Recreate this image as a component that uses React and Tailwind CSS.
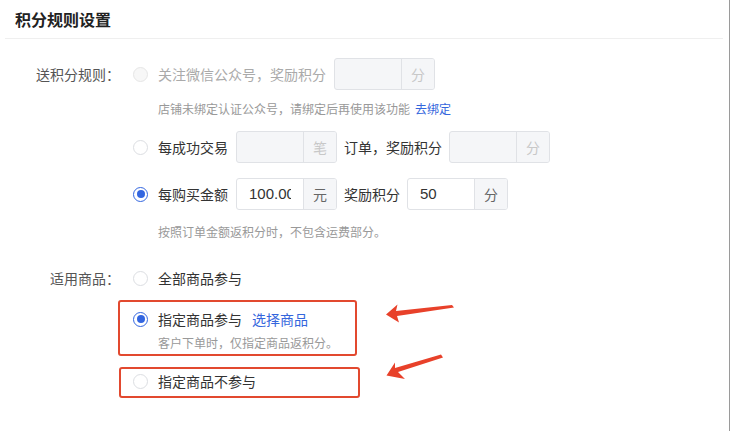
import { useState } from "react";

const FONT = { fontFamily: '"Noto Sans CJK SC", "Noto Sans", sans-serif' };

function Radio({ checked, disabled }) {
  if (checked) {
    return (
      <span className="w-[15px] h-[15px] rounded-full border border-[#3366e0] flex items-center justify-center shrink-0">
        <span className="w-[8px] h-[8px] rounded-full bg-[#3366e0]" />
      </span>
    );
  }
  return (
    <span
      className={`w-[15px] h-[15px] rounded-full border shrink-0 ${
        disabled ? "border-[#e6e6e6] bg-[#f7f7f7]" : "border-[#dcdee2] bg-white"
      }`}
    />
  );
}

function UnitInput({ value, unit, disabled }) {
  return (
    <div
      className={`flex h-[32px] rounded-[3px] border border-[#e0e2e6] overflow-hidden ${
        disabled ? "bg-[#f5f6f8]" : "bg-white"
      }`}
    >
      <input
        readOnly
        disabled={disabled}
        value={value}
        className="w-[66px] px-3 text-[15px] text-[#333] bg-transparent outline-none"
        style={{ fontFamily: '"Liberation Sans", sans-serif' }}
      />
      <span
        className={`w-[33px] border-l border-[#e0e2e6] bg-[#f5f6f8] flex items-center justify-center text-[14px] ${
          disabled ? "text-[#c8c8c8]" : "text-[#666]"
        }`}
      >
        {unit}
      </span>
    </div>
  );
}

function Arrows() {
  return (
    <svg className="absolute inset-0 pointer-events-none" width="730" height="431">
      <polygon
        fill="#e8412a"
        points="386,314.5 397.5,304.5 396,311 452,305 454,307.5 397,316 399,322.5"
      />
      <polygon
        fill="#e8412a"
        points="386.5,375.5 395,362.5 395,368 441,354.5 443,357.5 398,372 405,379"
      />
    </svg>
  );
}

export default function App() {
  const [amount] = useState("100.00");

  return (
    <div
      className="relative w-[730px] h-[431px] bg-white border-r border-[#9a9a9a] overflow-hidden"
      style={FONT}
    >
      {/* Header */}
      <div className="h-[38px] px-[15px] flex items-center">
        <h1 className="text-[16px] font-bold text-[#222]">积分规则设置</h1>
      </div>
      <div className="ml-[5px] mr-[6px] h-px bg-[#efefef]" />

      {/* Form */}
      <div className="pt-[19px]">
        {/* 送积分规则 */}
        <div className="flex">
          <div className="w-[120px] shrink-0 h-[32px] flex items-center justify-end text-[14px] text-[#555]">
            送积分规则：
          </div>
          <div className="ml-[13px] flex flex-col">
            <div className="flex items-center h-[32px]">
              <Radio disabled />
              <span className="ml-[10px] text-[14px] text-[#aaa]">关注微信公众号，奖励积分</span>
              <div className="ml-[8px]">
                <UnitInput value="" unit="分" disabled />
              </div>
            </div>
            <div className="pl-[25px] mt-[10px] h-[18px] flex items-center text-[12px] text-[#999]">
              店铺未绑定认证公众号，请绑定后再使用该功能
              <span className="ml-[5px] text-[#3466dd]">去绑定</span>
            </div>

            <div className="flex items-center h-[32px] mt-[13px]">
              <Radio />
              <span className="ml-[10px] text-[14px] text-[#333]">每成功交易</span>
              <div className="ml-[8px]">
                <UnitInput value="" unit="笔" disabled />
              </div>
              <span className="ml-[7px] text-[14px] text-[#333]">订单，奖励积分</span>
              <div className="ml-[7px]">
                <UnitInput value="" unit="分" disabled />
              </div>
            </div>

            <div className="flex items-center h-[32px] mt-[15px]">
              <Radio checked />
              <span className="ml-[10px] text-[14px] text-[#333]">每购买金额</span>
              <div className="ml-[8px]">
                <UnitInput value={amount} unit="元" />
              </div>
              <span className="ml-[7px] text-[14px] text-[#333]">奖励积分</span>
              <div className="ml-[7px]">
                <UnitInput value="50" unit="分" />
              </div>
            </div>
            <div className="pl-[25px] mt-[13px] h-[18px] flex items-center text-[12px] text-[#999]">
              按照订单金额返积分时，不包含运费部分。
            </div>
          </div>
        </div>

        {/* 适用商品 */}
        <div className="flex mt-[26px]">
          <div className="w-[120px] shrink-0 h-[22px] flex items-center justify-end text-[14px] text-[#555]">
            适用商品：
          </div>
          <div className="ml-[13px] flex flex-col">
            <div className="flex items-center h-[22px]">
              <Radio />
              <span className="ml-[10px] text-[14px] text-[#333]">全部商品参与</span>
            </div>

            <div className="-ml-[15px] mt-[11px] w-[239px] h-[56px] border-2 border-[#e2492f] rounded-[3px] pl-[13px] pt-[6px]">
              <div className="flex items-center h-[22px]">
                <Radio checked />
                <span className="ml-[10px] text-[14px] text-[#333]">指定商品参与</span>
                <span className="ml-[10px] text-[14px] text-[#3466dd]">选择商品</span>
              </div>
              <div className="pl-[25px] mt-[4px] h-[18px] flex items-center text-[12px] text-[#999]">
                客户下单时，仅指定商品返积分。
              </div>
            </div>

            <div className="-ml-[14px] mt-[11px] w-[241px] h-[31px] border-2 border-[#e2492f] rounded-[3px] pl-[12px] flex items-center">
              <div className="flex items-center -mt-[3px]">
                <Radio />
                <span className="ml-[10px] text-[14px] text-[#333]">指定商品不参与</span>
              </div>
            </div>
          </div>
        </div>
      </div>

      <Arrows />
    </div>
  );
}
